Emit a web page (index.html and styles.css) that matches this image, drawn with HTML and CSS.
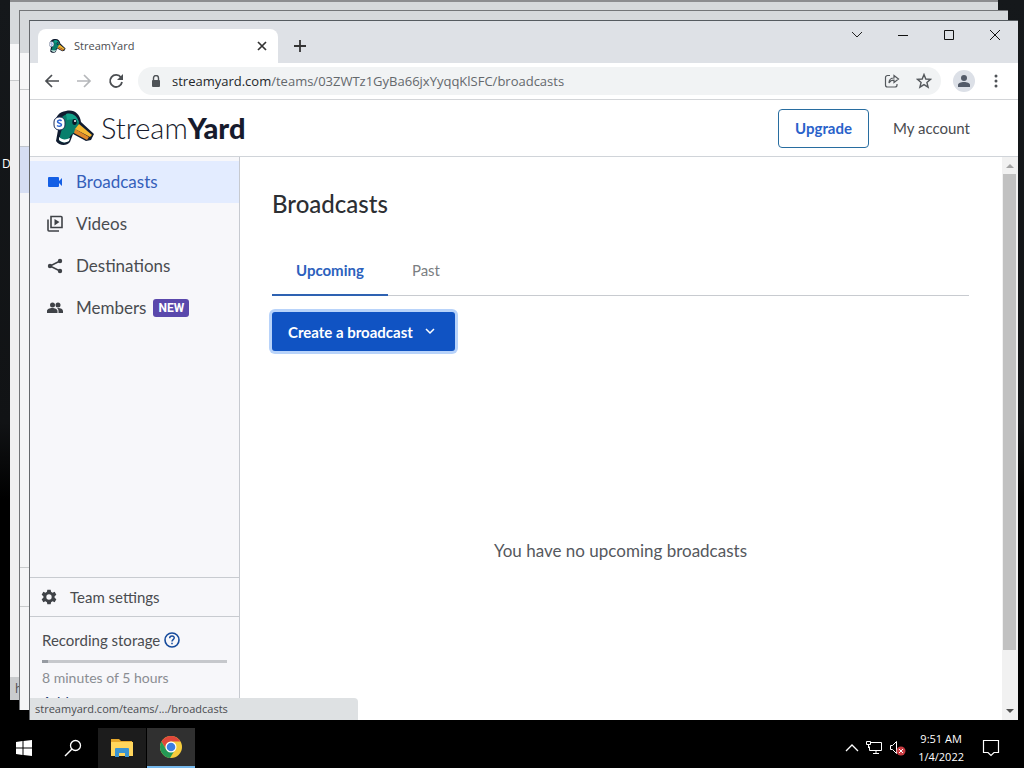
FILE: index.html
```html
<!DOCTYPE html>
<html lang="en">
<head>
<meta charset="utf-8">
<title>StreamYard</title>
<link rel="stylesheet" href="styles.css">
</head>
<body>
<svg class="defs" aria-hidden="true">
  <symbol id="duck" viewBox="0 0 42 36">
    <path d="M3 31 5 20C0 12 3 2 13 1c8-2 14 3 15 11l13 12-3 6-5 1-13-7-3 8c-3 4-11 4-14-1Z" fill="#101c30"/>
    <path d="M8 22c2-5 1-9 1-15 6-6 15-3 17 6l-2 9c-6 1-8 5-8 9-3 2-8 2-10-1Z" fill="#087f6c"/>
    <path d="M13 4c7-2 12 3 13 9l-5-4-7 1Z" fill="#12a18a"/>
    <path d="M6 30c3 3 7 3 10 1l1-3c-4 2-8 2-11-1Z" fill="#fff"/>
    <path d="m26 14 13 11-2 2-15-8Z" fill="#f5b832"/>
    <path d="m22 19 14 8-2 3-13-7Z" fill="#df8728"/>
    <ellipse cx="21.500" cy="12" rx="2.200" ry="3" fill="#0b1728"/>
    <circle cx="22" cy="11" r="1" fill="#fff"/>
    <rect x="1" y="7" width="11" height="13" rx="5" fill="#fff" stroke="#1c2c54"/>
    <path d="M8.500 11c-1-1.500-4-1-4 .8s4 1.200 4 3-3 2-4.500.7" fill="none" stroke="#2e66d5" stroke-width="1.500"/>
  </symbol>
</svg>
<div class="desktop">
  <div class="workspace">
    <span class="desktop-label">D</span>
    <div class="window window-back" aria-hidden="true">
      <div class="back-tabs"></div>
      <div class="back-toolbar"></div>
      <div class="back-page"></div>
      <div class="back-status">h</div>
    </div>
    <div class="window window-middle" aria-hidden="true">
      <div class="back-tabs"></div>
      <div class="back-toolbar"></div>
      <div class="back-header"></div>
      <div class="back-active"></div>
      <div class="back-page"></div>
      <div class="back-settings"></div>
      <div class="back-foot"></div>
    </div>
    <div class="window window-front">
      <div class="tabstrip">
        <div class="browser-tab">
          <svg class="favicon"><use href="#duck"/></svg>
          <span class="tab-title">StreamYard</span>
          <button class="icon-button" aria-label="Close tab"><svg width="10" height="10" viewBox="0 0 10 10"><path d="m1 1 8 8M9 1 1 9" stroke="#333" stroke-width="1.700"/></svg></button>
        </div>
        <button class="icon-button new-tab" aria-label="New tab"><svg width="12" height="12" viewBox="0 0 12 12"><path d="M6 0v12M0 6h12" stroke="#333" stroke-width="1.800"/></svg></button>
        <div class="window-controls">
          <button class="icon-button" aria-label="Search tabs"><svg width="12" height="12" viewBox="0 0 12 12"><path d="m1 3 5 5 5-5" fill="none" stroke="#222"/></svg></button>
          <button class="icon-button" aria-label="Minimize"><svg width="12" height="12" viewBox="0 0 12 12"><path d="M1 6.500h10" stroke="#111"/></svg></button>
          <button class="icon-button" aria-label="Maximize"><svg width="12" height="12" viewBox="0 0 12 12"><path d="M1.500 1.500h9v9h-9z" fill="none" stroke="#111"/></svg></button>
          <button class="icon-button" aria-label="Close"><svg width="12" height="12" viewBox="0 0 12 12"><path d="m1 1 10 10M11 1 1 11" stroke="#111"/></svg></button>
        </div>
      </div>
      <div class="toolbar">
        <button class="icon-button" aria-label="Back"><svg width="16" height="16" viewBox="0 0 16 16"><path d="M15 8H2M8 2 2 8l6 6" fill="none" stroke="#4b4e52" stroke-width="1.700"/></svg></button>
        <button class="icon-button" aria-label="Forward"><svg width="16" height="16" viewBox="0 0 16 16"><path d="M1 8h13M8 2l6 6-6 6" fill="none" stroke="#b5b7ba" stroke-width="1.700"/></svg></button>
        <button class="icon-button" aria-label="Reload"><svg width="16" height="16" viewBox="0 0 16 16"><path d="M13 4.500A6 6 0 1 0 14 9" fill="none" stroke="#4b4e52" stroke-width="1.800"/><path d="M15 1v6H9Z" fill="#4b4e52"/></svg></button>
        <div class="address">
          <svg width="10" height="13" viewBox="0 0 10 13"><path d="M2.500 6V3a2.500 2.500 0 0 1 5 0v3" fill="none" stroke="#4f5357" stroke-width="1.400"/><rect x="1" y="5" width="8" height="7" rx="1" fill="#4f5357"/></svg>
          <span class="url"><b>streamyard.com</b>/teams/03ZWTz1GyBa66jxYyqqKlSFC/broadcasts</span>
          <button class="icon-button" aria-label="Share"><svg width="16" height="16" viewBox="0 0 16 16"><path d="M6 2.500H3.500a2 2 0 0 0-2 2V12a2 2 0 0 0 2 2H11a2 2 0 0 0 2-2v-1M5 10c0-3 2-5 5-5V2.500L14.500 6 10 9.500V7.200C8 7.200 6 8 5 10Z" fill="none" stroke="#54585c" stroke-width="1.200"/></svg></button>
          <button class="icon-button" aria-label="Bookmark"><svg width="16" height="16" viewBox="0 0 16 16"><path d="m8 1.500 1.800 4.500 4.700.4-3.600 3 1.200 4.800L8 11.600l-4.100 2.600 1.200-4.800-3.600-3L6.200 6Z" fill="none" stroke="#54585c" stroke-width="1.400"/></svg></button>
        </div>
        <button class="icon-button avatar" aria-label="Profile"><svg width="14" height="14" viewBox="0 0 14 14"><circle cx="7" cy="4" r="3" fill="#535b69"/><path d="M1 13v-2c0-4 12-4 12 0v2Z" fill="#535b69"/></svg></button>
        <button class="icon-button menu" aria-label="Menu"><svg width="4" height="14" viewBox="0 0 4 14"><circle cx="2" cy="2" r="1.500" fill="#4f5357"/><circle cx="2" cy="7" r="1.500" fill="#4f5357"/><circle cx="2" cy="12" r="1.500" fill="#4f5357"/></svg></button>
      </div>
      <header class="site-header">
        <a class="logo" href="#" aria-label="StreamYard"><svg width="42" height="36"><use href="#duck"/></svg><span>Stream<b>Yard</b></span></a>
        <a class="upgrade" href="#">Upgrade</a>
        <a class="account" href="#">My account</a>
      </header>
      <div class="site-body">
        <aside class="sidebar">
          <nav class="side-nav">
            <a class="side-link active" href="#"><svg width="18" height="18" viewBox="0 0 18 18"><path d="M3 4h9q1 0 1 1v3l3-3v8l-3-3v3q0 1-1 1H3q-1 0-1-1V5q0-1 1-1Z" fill="#145fe5"/></svg>Broadcasts</a>
            <a class="side-link" href="#"><svg width="18" height="18" viewBox="0 0 18 18"><path d="M5 1.500h10q1 0 1 1v10H5Zm-3 3V15q0 1 1 1h10" fill="none" stroke="#3f4247" stroke-width="1.600"/><path d="m8.500 4 5 3-5 3.500Z" fill="#3f4247"/></svg>Videos</a>
            <a class="side-link" href="#"><svg width="18" height="18" viewBox="0 0 18 18"><path d="m14 4-10 5 10 5" fill="none" stroke="#3f4247" stroke-width="1.500"/><circle cx="14" cy="4" r="2.200" fill="#3f4247"/><circle cx="4" cy="9" r="2.200" fill="#3f4247"/><circle cx="14" cy="14" r="2.200" fill="#3f4247"/></svg>Destinations</a>
            <a class="side-link" href="#"><svg width="18" height="18" viewBox="0 0 18 18"><circle cx="6.500" cy="6" r="2.500" fill="#3f4247"/><circle cx="12" cy="6" r="2.500" fill="#3f4247"/><path d="M1 14v-2c0-4 10.500-4 10.500 0v2Zm11.500 0v-2q0-1.700-1.400-2.900C14 8.700 17 10 17 12v2Z" fill="#3f4247"/></svg>Members<span class="badge">NEW</span></a>
          </nav>
          <a class="settings" href="#"><svg width="16" height="16" viewBox="0 0 24 24"><path fill="#3f4247" fill-rule="evenodd" d="M9.500 1h5l.6 3.300 2.200 1.200 3.200-1.200 2.500 4.300-2.600 2.200v2.400l2.600 2.200-2.500 4.300-3.200-1.200-2.200 1.200-.6 3.300h-5l-.6-3.300-2.200-1.200-3.200 1.200L1 15.400l2.600-2.200v-2.400L1 8.600l2.500-4.300 3.200 1.200 2.200-1.200ZM12 8a4 4 0 1 0 0 8 4 4 0 0 0 0-8Z"/></svg>Team settings</a>
          <section class="storage">
            <div class="storage-title">Recording storage <button class="icon-button" aria-label="Help"><svg width="16" height="16" viewBox="0 0 16 16"><circle cx="8" cy="8" r="7" fill="none" stroke="#164b9c" stroke-width="1.600"/><path d="M5.700 6.200c0-3 4.800-2.800 4.500-.2C10 7.700 8 7.500 8 9.500M8 10.700v1.600" fill="none" stroke="#164b9c" stroke-width="1.500"/></svg></button></div>
            <div class="meter"><div class="meter-fill"></div></div>
            <div class="usage">8 minutes of 5 hours</div>
            <a class="add" href="#">Add</a>
          </section>
        </aside>
        <main class="content">
          <h1>Broadcasts</h1>
          <div class="tabs" role="tablist">
            <button class="tab selected" role="tab" aria-selected="true">Upcoming</button>
            <button class="tab" role="tab" aria-selected="false">Past</button>
          </div>
          <button class="create">Create a broadcast<svg width="10" height="10" viewBox="0 0 10 10"><path d="m1 2 4 4 4-4" fill="none" stroke="#fff" stroke-width="1.500"/></svg></button>
          <p class="empty">You have no upcoming broadcasts</p>
        </main>
        <div class="scrollbar" aria-hidden="true">
          <svg width="16" height="17" viewBox="0 0 16 17"><path d="m4 11 4-4 4 4Z" fill="#a3a3a3"/></svg>
          <div class="track"><div class="thumb"></div></div>
          <svg width="16" height="17" viewBox="0 0 16 17"><path d="m4 6 4 4 4-4Z" fill="#505050"/></svg>
        </div>
      </div>
      <div class="status">streamyard.com/teams/.../broadcasts</div>
    </div>
  </div>
  <footer class="taskbar">
    <button class="task" aria-label="Start"><svg width="16" height="16" viewBox="0 0 16 16"><path d="m0 2 6.500-1v6.500H0Zm7.500-1.100L16 0v7.500H7.500ZM0 8.500h6.500V15L0 14Zm7.500 0H16V16l-8.500-1Z" fill="#fff"/></svg></button>
    <button class="task" aria-label="Search"><svg width="18" height="18" viewBox="0 0 18 18"><circle cx="11.500" cy="6.500" r="5" fill="none" stroke="#fff" stroke-width="1.300"/><path d="m8 10-7 7" stroke="#fff" stroke-width="1.500"/></svg></button>
    <button class="task open" aria-label="File Explorer"><svg width="22" height="20" viewBox="0 0 22 20"><path d="M0 1h8l2 2h11v14H0Z" fill="#e6a82c"/><path d="M0 4h22v14H0Z" fill="#ffd65c"/><path d="M4 11q0-1 1-1h12q1 0 1 1v8h-4v-4H8v4H4Z" fill="#3a94d2"/></svg></button>
    <button class="task open current" aria-label="Chrome"><svg width="24" height="24" viewBox="0 0 24 24"><circle cx="12" cy="12" r="11" fill="#f6cc3c"/><path d="M2.500 6.500A11 11 0 0 1 21.500 6.500H12a5.500 5.500 0 0 0-4.800 8.200Z" fill="#df473b"/><path d="M2.500 6.500A11 11 0 0 0 11 23l5.200-8.500A5.500 5.500 0 0 1 7.200 14.700Z" fill="#249a56"/><circle cx="12" cy="12" r="5.500" fill="#fff"/><circle cx="12" cy="12" r="4.300" fill="#3d7de0"/></svg></button>
    <div class="tray">
      <svg width="14" height="10" viewBox="0 0 14 10"><path d="m1 8 6-6 6 6" fill="none" stroke="#fff" stroke-width="1.300"/></svg>
      <svg width="18" height="16" viewBox="0 0 18 16"><path d="M5.500 2.500h11v8h-12v-4M8 13.500h6M11 10.500v3M1.500 1.500h4v3h-4zM3.500 5v3" fill="none" stroke="#fff"/></svg>
      <svg width="17" height="16" viewBox="0 0 17 16"><path d="M1.500 5.500h2l4-4v12l-4-4h-2Z" fill="none" stroke="#fff"/><circle cx="12" cy="11" r="4.500" fill="#c83c42"/><path d="m10 9 4 4m0-4-4 4" stroke="#fff"/></svg>
      <div class="clock"><time>9:51 AM</time><time>1/4/2022</time></div>
      <svg width="18" height="18" viewBox="0 0 18 18"><path d="M1.500 1.500h15v12H12l-3 3-3-3H1.500Z" fill="none" stroke="#fff" stroke-width="1.200"/></svg>
    </div>
  </footer>
</div>
</body>
</html>
```
FILE: styles.css
```css
* { box-sizing: border-box; }
body { margin: 0; font-family: Lato, "Open Sans", sans-serif; color: #4a4c50; }
a { color: inherit; text-decoration: none; }
button { border: 0; background: none; padding: 0; font: inherit; color: inherit; }
svg { flex: none; display: block; }
.defs { position: absolute; width: 0; height: 0; }
.desktop { height: 100vh; min-height: 600px; display: flex; flex-direction: column; background: linear-gradient(#15181b, #111315 55%, #000 65%); overflow: hidden; }
.workspace { flex: 1; min-height: 0; position: relative; }
.desktop-label { position: absolute; left: 2px; top: 156px; font: 12px/16px "Open Sans", sans-serif; color: #fff; }

/* Stacked windows */
.window { position: absolute; display: flex; flex-direction: column; background: #fff; overflow: hidden; }
.window-back { inset: 0 26px 28px 10px; border-top: 2px solid #8c8d90; background: #f0f0f1; }
.window-middle { inset: 10px 16px 18px 19px; border-top: 1px solid #737578; border-left: 1px solid #737578; background: #f5f5f7; }
.window-front { inset: 20px 6px 8px 29px; border-top: 1px solid #555b60; border-left: 1px solid #66696d; }
.back-tabs { height: 42px; background: #d6d9dc; }
.back-toolbar { height: 37px; background: #f7f7f8; border-bottom: 1px solid #c8cacc; }
.back-header { height: 57px; background: #f7f7f8; border-bottom: 1px solid #bfc4cc; }
.back-active { height: 46px; background: #d6def3; }
.back-page { flex: 1; }
.back-status { height: 23px; padding-left: 5px; background: #c9cbcd; font: 12px/23px "Open Sans", sans-serif; }
.back-settings { height: 40px; border-top: 1px solid #c8cacc; border-bottom: 1px solid #c8cacc; }
.back-foot { height: 103px; }

/* Browser chrome */
.icon-button { display: flex; align-items: center; justify-content: center; flex: none; }
.tabstrip { flex: none; height: 42px; display: flex; padding: 8px 6px 0 8px; background: #dee1e6; }
.browser-tab { width: 240px; display: flex; align-items: center; gap: 8px; padding: 0 11px; background: #fff; border-radius: 8px 8px 0 0; font: 11px/16px "Open Sans", sans-serif; }
.favicon { width: 17px; height: 16px; }
.tab-title { flex: 1; }
.new-tab { width: 44px; }
.window-controls { margin-left: auto; display: flex; gap: 34px; padding: 0 11px 22px 0; }
.toolbar { flex: none; height: 37px; display: flex; align-items: center; gap: 16px; padding: 0 17px 0 14px; border-bottom: 1px solid #d3d5d8; }
.address { flex: 1; height: 28px; display: flex; align-items: center; gap: 16px; margin-left: -2px; padding: 0 9px 0 13px; border-radius: 14px; background: #f1f3f4; font: 13px/20px "Open Sans", sans-serif; color: #64686c; }
.url { flex: 1; margin-left: -5px; }
.url b { font-weight: 400; color: #24272a; }
.avatar { width: 22px; height: 22px; margin-left: -4px; border-radius: 11px; background: #dce0e7; }
.menu { width: 10px; }
.status { position: absolute; left: 0; bottom: 0; width: 328px; height: 22px; padding-left: 5px; border-radius: 0 4px 0 0; background: #dee1e3; font: 11px/22px "Open Sans", sans-serif; }

/* Site */
.site-header { flex: none; height: 57px; display: flex; align-items: center; padding: 0 48px 0 23px; border-bottom: 1px solid #d0d4d9; }
.logo { display: flex; align-items: center; gap: 6px; margin-right: auto; font-size: 29px; line-height: 36px; font-weight: 300; color: #171b2d; }
.logo b { font-weight: 900; }
.upgrade { height: 39px; padding: 0 16px; border: 1px solid #286da0; border-radius: 4px; font-size: 15px; line-height: 37px; font-weight: 700; color: #2962ca; }
.account { margin-left: 24px; font-size: 15px; line-height: 20px; }
.site-body { flex: 1; min-height: 0; display: flex; }
.sidebar { flex: none; width: 210px; display: flex; flex-direction: column; background: #f7f7fa; border-right: 1px solid #c7cad0; overflow: hidden; }
.side-nav { flex: 1; padding-top: 4px; }
.side-link { height: 42px; display: flex; align-items: center; gap: 12px; padding-left: 16px; font-size: 17px; line-height: 24px; }
.active { color: #355fba; background: #e3ecff; }
.badge { margin-left: -5px; padding: 0 5px; border-radius: 3px; background: #5a48ac; color: #fff; font: 700 12px/18px Roboto, sans-serif; }
.settings { flex: none; height: 40px; display: flex; align-items: center; gap: 13px; padding-left: 11px; border-top: 1px solid #c8cbd0; border-bottom: 1px solid #c8cbd0; font-size: 15px; line-height: 20px; }
.storage { flex: none; height: 103px; padding: 12px 12px 0; font-size: 15px; line-height: 22px; }
.storage-title { display: flex; align-items: center; gap: 4px; }
.meter { height: 3px; margin: 9px 0 4px; background: #c6c8cc; }
.meter-fill { width: 3%; height: 3px; background: #979ba2; }
.usage { font-size: 14px; color: #8a8d92; }
.add { display: block; margin-top: 2px; color: #203e75; }
.content { flex: 1; min-width: 0; display: flex; flex-direction: column; align-items: flex-start; padding: 32px 33px 0 32px; }
h1 { margin: 0; font-size: 24px; line-height: 30px; font-weight: 500; color: #2d2f33; }
.tabs { width: 100%; display: flex; margin-top: 27px; border-bottom: 1px solid #c8cbd0; }
.tab { height: 50px; padding: 0 24px; font-size: 15px; line-height: 48px; color: #7b7e82; border-bottom: 2px solid transparent; margin-bottom: -1px; }
.selected { color: #2c61bd; font-weight: 700; border-color: #2e62b2; }
.create { height: 39px; margin-top: 16px; padding: 0 20px 0 16px; display: flex; align-items: center; gap: 12px; border-radius: 3px; background: #1053c3; color: #fff; font-size: 15px; font-weight: 700; box-shadow: 0 0 0 3px #b8d3fa; }
.empty { align-self: center; margin: 188px 0 0; font-size: 17px; line-height: 24px; color: #55585d; }
.scrollbar { flex: none; width: 16px; display: flex; flex-direction: column; background: #f1f1f1; }
.track { flex: 1; padding: 0 2px 0 1px; }
.thumb { height: 90%; background: #c1c1c1; }

/* Taskbar */
.taskbar { flex: none; height: 40px; display: flex; background: #000; color: #fff; }
.task { width: 48px; display: flex; align-items: center; justify-content: center; margin-right: 1px; }
.open { background: #1c1c1c; }
.current { background: #303030; border-bottom: 2px solid #76b9ed; }
.tray { margin-left: auto; display: flex; align-items: center; gap: 6px; padding-right: 24px; }
.clock { display: flex; flex-direction: column; align-items: center; margin: 0 12px 0 6px; font: 11px/18px "Open Sans", sans-serif; }
```
